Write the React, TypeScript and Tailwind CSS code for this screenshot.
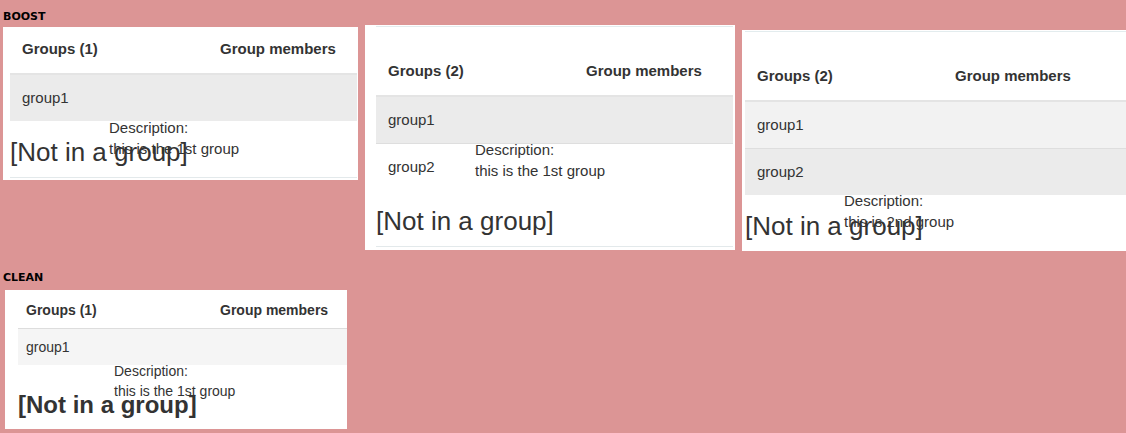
const sans = { fontFamily: '"Liberation Sans", Arial, sans-serif' };

const Header = ({ count, col }: { count: number; col: string }) => (
  <div className="flex h-[48px] items-center border-b-2 border-[#e4e4e4] pb-[2px] text-[15px] font-bold text-[#333]">
    <div className={`${col} pl-3`}>Groups ({count})</div>
    <div className="pl-3 whitespace-nowrap">Group members</div>
  </div>
);

const Row = ({ name, bg, top }: { name: string; bg: string; top?: boolean }) => (
  <div className={`flex items-center pl-3 text-[15px] text-[#333] ${bg} ${top ? 'h-[47px] border-t border-[#dedede]' : 'h-[46px]'}`}>
    {name}
  </div>
);

const Desc = ({ text, pos }: { text: string; pos: string }) => (
  <div className={`absolute ${pos} text-[15px] leading-[21px] text-[#333] whitespace-nowrap`}>
    <div>Description:</div>
    <div>{text}</div>
  </div>
);

const NotInGroup = () => (
  <>
    <h3 className="mt-[17px] text-[26px] leading-[1.1] text-[#333] whitespace-nowrap">[Not in a group]</h3>
    <div className="mt-[10px] border-t border-[#e3e9eb]" />
  </>
);

export default function App() {
  return (
    <div className="min-h-[433px] w-full overflow-hidden bg-[#dc9595] px-[3px]" style={sans}>
      <div className="pt-[10px] text-[11px] leading-[13px] font-bold text-black" style={{ fontFamily: '"DejaVu Sans", sans-serif' }}>
        BOOST
      </div>

      <div className="flex items-start gap-[7px] h-[228px]">
        <div className="relative mt-[4px] h-[153px] w-[355px] shrink-0 bg-white pl-[7px] pr-[1px]">
          <Header count={1} col="w-[198px]" />
          <Row name="group1" bg="bg-[#ebebeb]" />
          <Desc text="this is the 1st group" pos="left-[106px] top-[90px]" />
          <NotInGroup />
        </div>

        <div className="relative mt-[2px] h-[225px] w-[370px] shrink-0 bg-white pl-[11px] pr-[2px]">
          <div className="mt-[1px] border-t border-[#e3ecee] pt-[22px]">
            <Header count={2} col="w-[198px]" />
            <Row name="group1" bg="bg-[#ebebeb]" />
            <Row name="group2" bg="bg-white" top />
          </div>
          <Desc text="this is the 1st group" pos="left-[110px] top-[114px]" />
          <NotInGroup />
        </div>

        <div className="relative mt-[7px] h-[221px] w-[400px] shrink-0 bg-white pl-[3px]">
          <div className="mt-[1px] border-t border-[#e3ecee] pt-[22px]">
            <Header count={2} col="w-[198px]" />
            <Row name="group1" bg="bg-[#f2f2f2]" />
            <Row name="group2" bg="bg-[#ebebeb]" top />
          </div>
          <Desc text="this is 2nd group" pos="left-[102px] top-[160px]" />
          <h3 className="mt-[17px] text-[26px] leading-[1.1] text-[#333] whitespace-nowrap">[Not in a group]</h3>
        </div>
      </div>

      <div className="mt-[20px] text-[11px] leading-[13px] font-bold text-black" style={{ fontFamily: '"DejaVu Sans", sans-serif' }}>
        CLEAN
      </div>

      <div className="relative ml-[2px] mt-[6px] h-[139px] w-[342px] bg-white pl-[13px] text-[#333]">
        <div className="flex h-[39px] items-center border-b border-[#dddddd] pt-[3px] text-[14px] font-bold">
          <div className="w-[194px] pl-2">Groups (1)</div>
          <div className="pl-2">Group members</div>
        </div>
        <div className="flex h-[36px] items-center bg-[#f5f5f5] pl-2 text-[14px]">group1</div>
        <div className="absolute left-[109px] top-[71px] text-[14px] leading-[20px] whitespace-nowrap">
          <div>Description:</div>
          <div>this is the 1st group</div>
        </div>
        <h3 className="mt-[27px] text-[24px] leading-[1.1] font-bold whitespace-nowrap">[Not in a group]</h3>
      </div>
    </div>
  );
}
